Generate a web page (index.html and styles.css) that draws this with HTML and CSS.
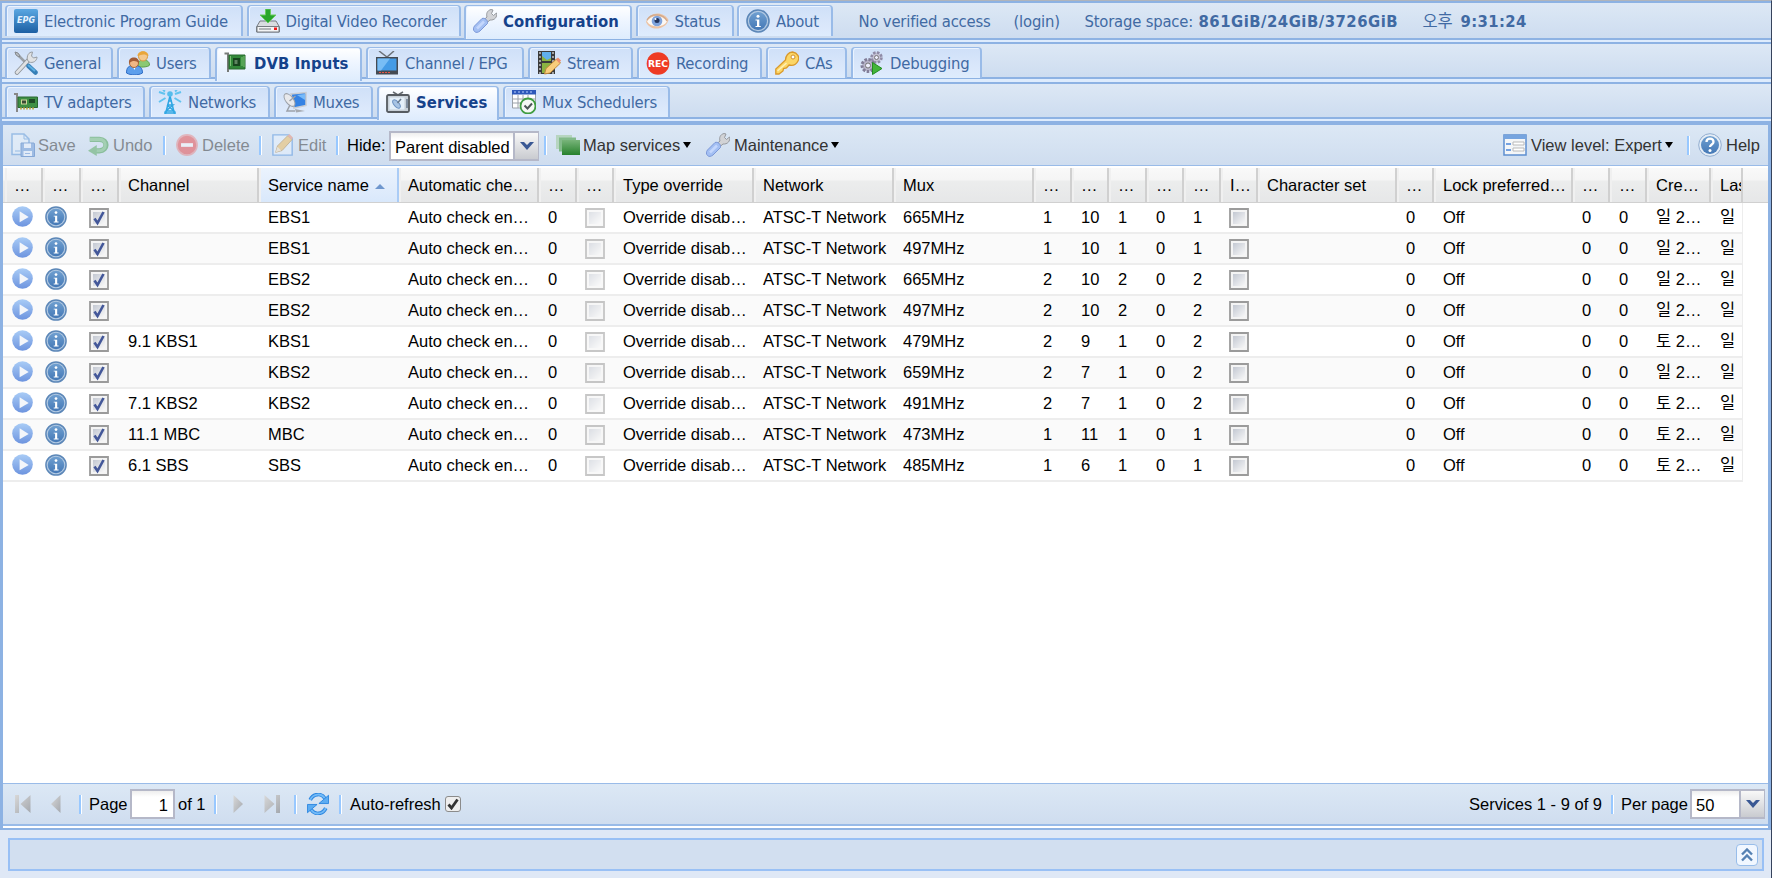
FILE: index.html
```html
<!DOCTYPE html>
<html lang="ko">
<head>
<meta charset="utf-8">
<title>Tvheadend</title>
<link rel="stylesheet" href="styles.css">
</head>
<body>
<svg class="defs" width="0" height="0" aria-hidden="true">
<defs>
<linearGradient id="gBlue" x1="0" y1="0" x2="0" y2="1"><stop offset="0" stop-color="#6f9fd0"/><stop offset="1" stop-color="#4478b6"/></linearGradient>
<linearGradient id="gPlay" x1="0" y1="0" x2="0" y2="1"><stop offset="0" stop-color="#a9ccf6"/><stop offset="1" stop-color="#6d94df"/></linearGradient>
<linearGradient id="gEpg" x1="0" y1="0" x2="0" y2="1"><stop offset="0" stop-color="#5aa7e2"/><stop offset="1" stop-color="#1c5fa3"/></linearGradient>
<linearGradient id="gGrey" x1="0" y1="0" x2="1" y2="1"><stop offset="0" stop-color="#d8d8d8"/><stop offset="1" stop-color="#a4a8ae"/></linearGradient>
<linearGradient id="gMap" x1="0" y1="0" x2="0" y2="1"><stop offset="0" stop-color="#78b47a"/><stop offset="1" stop-color="#27812c"/></linearGradient>
<linearGradient id="gBox" x1="0" y1="0" x2="1" y2="1"><stop offset="0" stop-color="#c3c8d2"/><stop offset="1" stop-color="#f8f8f8"/></linearGradient>
</defs>
<symbol id="i-epg" viewBox="0 0 24 24"><rect x="0" y="0" width="24" height="24" rx="2" fill="url(#gEpg)"/><text x="12" y="14" font-family="DejaVu Sans" font-size="8" font-weight="bold" font-style="italic" text-anchor="middle" fill="#e4f2ff" textLength="18" lengthAdjust="spacingAndGlyphs" letter-spacing="0">EPG</text></symbol>
<symbol id="i-dvr" viewBox="0 0 24 24"><path d="M4 12h16l3.500 6v5H.5v-5z" fill="#d9dce0" stroke="#777c83"/><path d="M1 17.500h22v5.500H1z" fill="#f3f4f5" stroke="#777c83"/><path d="M3 20h12" stroke="#73777d"/><path d="M18 18.500h3v2.500h-3z" fill="#f01818"/><path d="M9.500 0h5v6h5.500l-8 8-8-8h5.500z" fill="#28a62c" stroke="#6ccb60"/></symbol>
<symbol id="i-wrench" viewBox="0 0 24 24"><path d="M10 11.500l4-3.500c-1-3 0-6.500 4-7.500l2 .500-1.500 3.500 2 2L23.500 4c1 4-2 7.500-6.500 7l-4 3.500z" fill="#d2d3d6" stroke="#96999e"/><path d="M1.500 22.500C0 21 0 19 1.500 17L9 9.500c3-1 6 1.500 5.500 5L7 22c-2 1.500-4 2-5.500.5z" fill="#a3bff3" stroke="#7c98d8"/><path d="M4 19.500l7-7" stroke="#c4d7fd" stroke-width="2.500"/></symbol>
<symbol id="i-eye" viewBox="0 0 24 24"><path d="M1 13C4 2 19 2 23.500 11c-3 10-18 12-22.500 2z" fill="#edc3a3"/><path d="M2 12.500c4-7 15-7 20 0-4 6.500-16 6.500-20 0z" fill="#fbf8f5"/><path d="M2 11c4-7 16-7 20 1" fill="none" stroke="#cfa88c" stroke-width="1.200"/><circle cx="12" cy="12" r="5.300" fill="#7fa3dc"/><circle cx="12" cy="11.500" r="2.500" fill="#23345e"/><circle cx="10.500" cy="10" r="1" fill="#fff"/></symbol>
<symbol id="i-info" viewBox="0 0 24 24"><circle cx="12" cy="12" r="11" fill="#b2c9e2" stroke="#5c87b8" stroke-width="1.600"/><circle cx="12" cy="12" r="9" fill="url(#gBlue)"/><circle cx="12" cy="7.200" r="1.500" fill="#fff"/><path d="M9.500 10.500h3.800V17h1.500v1H9.500v-1H11v-5.500H9.500z" fill="#fff"/></symbol>
<symbol id="i-tools" viewBox="0 0 24 24"><path d="M4 4l12 12" stroke="#9aa0a6" stroke-width="2.500"/><path d="M1 1l3 1 2 3-1 1-3-2z" fill="#b9bec3" stroke="#84898e"/><path d="M3 21.500l12-13" stroke="#8e9499" stroke-width="4.500" stroke-linecap="round"/><path d="M3 21.500l12-13" stroke="#e0e2e4" stroke-width="2.800" stroke-linecap="round"/><path d="M13.500 9c-1-4 1-8 5-8l-1 4 2 2 3.500-1c0 4-4 6.500-8 5z" fill="#e0e2e4" stroke="#989da2"/><path d="M14.500 15l7 6.500" stroke="#367fb7" stroke-width="4.500" stroke-linecap="round"/><path d="M14 14l7 6" stroke="#5cafe2" stroke-width="2"/></symbol>
<symbol id="i-users" viewBox="0 0 24 24"><path d="M12 15c0-5 2-6 5-6s6.500 1 6.500 5c0 2-11.500 3-11.500 1z" fill="#8bc973" stroke="#5c9f48"/><circle cx="17" cy="5.500" r="4.500" fill="#f4c98e" stroke="#d79a3d"/><path d="M11.500 5c0-6.500 11-6.500 11 0-3-2-7-2-11 0z" fill="#e9a63a"/><path d="M.5 22c0-5.500 2-7.500 7.500-7.500s8.500 2 8.500 7.500c-4 2.500-12 2.500-16 0z" fill="#5d9fec" stroke="#2f6cc4"/><path d="M6.500 15h3.500l-1.500 4z" fill="#fff"/><circle cx="8" cy="12" r="4.500" fill="#efb785" stroke="#a8673a"/><path d="M3 12C2 4.500 14 5 13 12c-3-2.500-6-3-10 0z" fill="#a35d37"/></symbol>
<symbol id="i-card" viewBox="0 0 24 24"><path d="M.5 2.500H4V21" fill="none" stroke="#777b78" stroke-width="2"/><path d="M5 4h16v14H5z" fill="#328839" stroke="#286a2f"/><path d="M9 7h7v8H9z" fill="#17451d"/><path d="M6.500 5v10M18 6v9M20 5v11" stroke="#7cc274"/><path d="M10.500 9h3v4h-3z" fill="#5f8560"/></symbol>
<symbol id="i-tv" viewBox="0 0 24 24"><path d="M4 0l8 6 7-6" fill="none" stroke="#6d737a" stroke-width="1.500"/><path d="M1 6h22v17.500H1z" fill="#454b53"/><path d="M2.500 7.500h19v12h-19z" fill="#449be6"/><path d="M2.500 7.500H15l-9 12H2.500z" fill="#78bdf5"/><path d="M4 21.500h12" stroke="#e75649" stroke-dasharray="2 1"/></symbol>
<symbol id="i-stream" viewBox="0 0 24 24"><path d="M1 0h17v23H1z" fill="#3b3b3b"/><path d="M5 1h9v9H5z" fill="#60b0ee"/><path d="M5 5l5 4 4-2v3H5zM5 12h9v10H5z" fill="#8ab342"/><path d="M3 1v22M16 1v22" stroke="#c4c4c4" stroke-width="1.500" stroke-dasharray="2 2"/><path d="M7.500 23l1.500-5.500L19.500 8l4 4L13 22z" fill="#f8cd7c" stroke="#c08839"/><path d="M19 8.500l2-2 3 3-2 2.500z" fill="#ef8d6e"/></symbol>
<symbol id="i-rec" viewBox="0 0 24 24"><circle cx="12" cy="12.500" r="11.300" fill="#ee3b24"/><text x="12" y="15.500" font-family="DejaVu Sans" font-size="8" font-weight="bold" text-anchor="middle" fill="#fff" textLength="20" lengthAdjust="spacingAndGlyphs" letter-spacing="0">REC</text></symbol>
<symbol id="i-key" viewBox="0 0 24 24"><path d="M10.500 9c0-4 3-8 7-8 5 1 7.500 5 5.500 9-2 4-5 5-9 4l-2.500 3-3 .5-.5 2.500-4 3H.8v-5z" fill="#fcd666" stroke="#d9992c" stroke-width="1.300"/><path d="M2.500 20l9-8" stroke="#fff0b8" stroke-width="1.500"/><circle cx="18" cy="6" r="2" fill="#fff" stroke="#cf9030"/></symbol>
<symbol id="i-gears" viewBox="0 0 24 24"><circle cx="16.500" cy="6.500" r="5" fill="#c5c2d4" stroke="#8f8ba6" stroke-width="2.600" stroke-dasharray="2.500 1.400"/><circle cx="16.500" cy="6.500" r="2" fill="#eef" stroke="#777"/><circle cx="8" cy="14.500" r="6" fill="#b7b4c9" stroke="#817d98" stroke-width="3" stroke-dasharray="2.500 1.500"/><circle cx="8" cy="14.500" r="2.500" fill="#eef" stroke="#777"/><path d="M12.500 11.500l9.500 6-9.500 6z" fill="#43b539" stroke="#238c20"/></symbol>
<symbol id="i-adapter" viewBox="0 0 24 24"><path d="M0 4h3v18" fill="none" stroke="#888" stroke-width="2"/><path d="M4 7h19.500v10.500H4z" fill="#3f9044" stroke="#2a6932"/><path d="M7 9.500h6v5H7z" fill="#d0d99a"/><path d="M8 10.500h4v3H8z" fill="#3b4b36"/><path d="M15 9h6v4h-6z" fill="#1f4b26"/><path d="M6 18.500h14" stroke="#c2b258" stroke-width="2" stroke-dasharray="2 1"/></symbol>
<symbol id="i-net" viewBox="0 0 24 24"><path d="M12 6L7.500 24M12 6l4.500 18M10 11h4M9 15h6l-7 6h8l-7-6M6 23h12" fill="none" stroke="#2ea6e3" stroke-width="1.500"/><circle cx="12" cy="4" r="2.800" fill="#56bdec"/><path d="M7 4L1 2M7.500 8L1 12M17 4l6-2M16.500 8l6.500 4M7 1.500L5 0M17 1.500L19 0" stroke="#61c3ef" stroke-width="2"/></symbol>
<symbol id="i-mux" viewBox="0 0 24 24"><path d="M8 4l15-1.500v13L11 18z" fill="#3482e4" stroke="#c8ccd2" stroke-width="1.500"/><path d="M14 5l8-1v6z" fill="#78baf9"/><path d="M12 19l10 2-9 1.500z" fill="#a5a9b0"/><ellipse cx="6.500" cy="10" rx="3.800" ry="7.500" transform="rotate(-38 6.500 10)" fill="#e8e9ec" stroke="#9ca1a9"/><path d="M6.500 11l6-5M7 15l-3 6h8" stroke="#9ca1a9" stroke-width="1.500" fill="none"/></symbol>
<symbol id="i-services" viewBox="0 0 24 24"><path d="M7 2l5 3 5-3" fill="none" stroke="#656a70" stroke-width="1.500"/><rect x="1" y="5" width="22" height="17" rx="1.500" fill="#c8d0d8" stroke="#565b61" stroke-width="1.800"/><path d="M3.500 7.500h15v12h-15z" fill="#e5f0fa"/><ellipse cx="10.500" cy="14" rx="2.500" ry="5" transform="rotate(-40 10.500 14)" fill="#a8c4e4" stroke="#6e93c2"/><path d="M11.500 13l3.500-4" stroke="#68798c" stroke-width="1.500"/><path d="M21 9v9" stroke="#68798c" stroke-width="1.500"/></symbol>
<symbol id="i-sched" viewBox="0 0 24 24"><path d="M.5 1h23v17H.5z" fill="#fff" stroke="#9aa1a9"/><path d="M0 0h24v4.500H0z" fill="#2d58ba"/><path d="M1 9h22M1 13h22M6 5v13M11 5v13M16 5v13" stroke="#9ba2aa"/><path d="M2 2h20" stroke="#bcd0ff" stroke-dasharray="2 2"/><circle cx="16" cy="16" r="7.500" fill="#f5f8f5" stroke="#3f9c41" stroke-width="1.800"/><path d="M12.500 15.500l3 3 4.500-5" fill="none" stroke="#4c5556" stroke-width="2"/></symbol>
<symbol id="i-save" viewBox="0 0 24 24"><path d="M1 1h12l5 5v15.500H1z" fill="#e8f2fc" stroke="#5b96d8" stroke-width="1.500"/><path d="M13 1v5h5M4 18h5" fill="none" stroke="#5b96d8"/><path d="M10 10h13l.5 1v12.500H10z" fill="#6a98d7" stroke="#3b70bd"/><path d="M13 10.500h7v4.500h-7zM12.500 18h8.500v5h-8.500z" fill="#eff5ff"/><path d="M14 20.500h5" stroke="#6a98d7"/></symbol>
<symbol id="i-undo" viewBox="0 0 24 24"><path d="M2 5h11c10 0 10 13 0 13H9" fill="none" stroke="#419c48" stroke-width="6"/><path d="M2 5h11c9 0 9 13 0 13H8" fill="none" stroke="#73bd77" stroke-width="3.500"/><path d="M10 11.500V24L0 18z" fill="#56a95b"/></symbol>
<symbol id="i-delete" viewBox="0 0 24 24"><circle cx="12" cy="12" r="11" fill="#ea4546" stroke="#e98788" stroke-width="1.800"/><path d="M5.500 12h13" stroke="#fff" stroke-width="4"/></symbol>
<symbol id="i-edit" viewBox="0 0 24 24"><path d="M1 1h17l4 4v18H1z" fill="#e9f3ff" stroke="#4c8fde" stroke-width="1.500"/><path d="M4 20l2-7L17 2l5 4-11 12z" fill="#f1bb58" stroke="#ad823e"/><path d="M4 20l2-6 4 4z" fill="#f7e3c4"/><path d="M17 2l2-2 4 4-2 2z" fill="#e98b71"/></symbol>
<symbol id="i-map" viewBox="0 0 24 24"><path d="M0 2h16v14H0z" fill="#b7d5c0"/><path d="M3 4.500h17v14H3z" fill="#83ba8a"/><path d="M6 7h18v15H6z" fill="url(#gMap)"/></symbol>
<symbol id="i-view" viewBox="0 0 24 22"><path d="M1 1h22v20H1z" fill="#f4f6f8" stroke="#5d8fd0" stroke-width="1.500"/><path d="M1 1h22v4H1z" fill="#76a4df"/><path d="M3 10h5M3 16h5" stroke="#4a85d9" stroke-width="1.500"/><path d="M10 8h11v3H10zM10 14h11v3H10z" fill="#fff" stroke="#b9b9b9"/></symbol>
<symbol id="i-help" viewBox="0 0 24 24"><circle cx="12" cy="12" r="11.300" fill="#e5edf6" stroke="#92add0"/><circle cx="12" cy="12" r="9" fill="url(#gBlue)"/><path d="M8.500 9c0-4.500 7-4.500 7 0 0 2.500-3.500 2.500-3.500 5" fill="none" stroke="#fff" stroke-width="2.300"/><circle cx="12" cy="17.500" r="1.500" fill="#fff"/></symbol>
<symbol id="i-play" viewBox="0 0 22 22"><circle cx="11" cy="11" r="10.800" fill="url(#gPlay)"/><path d="M8 5.500l9.500 6L8 17z" fill="#f4f6fa"/></symbol>
<symbol id="i-refresh" viewBox="0 0 24 24"><path d="M3.500 7.500C7 0 16 0 19.500 6M20.500 16.500C17 24 8 24 4.500 18" fill="none" stroke="#2c86df" stroke-width="4"/><path d="M3.500 7.500C7 0 16 0 19.500 6M20.500 16.500C17 24 8 24 4.500 18" fill="none" stroke="#72baf8" stroke-width="2"/><path d="M23.500 2.500v9H13zM.5 21.500v-9H11z" fill="#5cacf2" stroke="#2c86df"/></symbol>
<symbol id="i-prev" viewBox="0 0 10 18"><path d="M9.500 0v18L0 9z" fill="url(#gGrey)"/></symbol>
<symbol id="i-next" viewBox="0 0 10 18"><path d="M.5 0v18L10 9z" fill="url(#gGrey)"/></symbol>
<symbol id="i-first" viewBox="0 0 16 18"><path d="M0 0h4v18H0zM15.500 0v18L5.500 9z" fill="url(#gGrey)"/></symbol>
<symbol id="i-last" viewBox="0 0 16 18"><path d="M12 0h4v18h-4zM.5 0v18l10-9z" fill="url(#gGrey)"/></symbol>
<symbol id="i-box" viewBox="0 0 20 20"><path d="M1 1h18v18H1z" fill="#f4f4f4" stroke="#9b9b9b" stroke-width="1.800"/><path d="M4 4h12v12H4z" fill="url(#gBox)"/></symbol>
<symbol id="i-tick" viewBox="0 0 20 20"><path d="M1 1h18v18H1z" fill="#f4f4f4" stroke="#9b9b9b" stroke-width="1.800"/><path d="M4 4h12v12H4z" fill="url(#gBox)"/><path d="M5.500 10.500l3 4.500 6-11" fill="none" stroke="#435799" stroke-width="2.600"/></symbol>
<symbol id="i-down" viewBox="0 0 14 8"><path d="M0 0h4l3 3 3-3h4L7 8z" fill="#3a5894"/></symbol>
</svg>

<div class="app">
  <nav class="tabs main-tabs">
    <a class="tab w238"><svg><use href="#i-epg"/></svg><span>Electronic Program Guide</span></a>
    <a class="tab w214"><svg><use href="#i-dvr"/></svg><span>Digital Video Recorder</span></a>
    <a class="tab active w168"><svg><use href="#i-wrench"/></svg><span>Configuration</span></a>
    <a class="tab w98"><svg><use href="#i-eye"/></svg><span>Status</span></a>
    <a class="tab w96"><svg><use href="#i-info"/></svg><span>About</span></a>
    <div class="status"><span class="access">No verified access</span><span class="login">(login)</span><span class="space">Storage space:</span><b class="storage">861GiB/24GiB/3726GiB</b><span class="ampm">오후</span><b class="clock">9:31:24</b></div>
  </nav>
  <nav class="tabs sub-tabs">
    <a class="tab w108"><svg><use href="#i-tools"/></svg><span>General</span></a>
    <a class="tab w94"><svg><use href="#i-users"/></svg><span>Users</span></a>
    <a class="tab active w147"><svg><use href="#i-card"/></svg><span>DVB Inputs</span></a>
    <a class="tab w158"><svg><use href="#i-tv"/></svg><span>Channel / EPG</span></a>
    <a class="tab w105"><svg><use href="#i-stream"/></svg><span>Stream</span></a>
    <a class="tab w125"><svg><use href="#i-rec"/></svg><span>Recording</span></a>
    <a class="tab w81"><svg><use href="#i-key"/></svg><span>CAs</span></a>
    <a class="tab w131"><svg><use href="#i-gears"/></svg><span>Debugging</span></a>
  </nav>
  <nav class="tabs sub-tabs third">
    <a class="tab w140"><svg><use href="#i-adapter"/></svg><span>TV adapters</span></a>
    <a class="tab w121"><svg><use href="#i-net"/></svg><span>Networks</span></a>
    <a class="tab w99"><svg><use href="#i-mux"/></svg><span>Muxes</span></a>
    <a class="tab active w122"><svg><use href="#i-services"/></svg><span>Services</span></a>
    <a class="tab w167"><svg><use href="#i-sched"/></svg><span>Mux Schedulers</span></a>
  </nav>

  <main class="panel">
    <div class="toolbar">
      <span class="btn off save"><svg class="ic"><use href="#i-save"/></svg>Save</span>
      <span class="btn off undo"><svg class="ic"><use href="#i-undo"/></svg>Undo</span>
      <i class="sep"></i>
      <span class="btn off delete"><svg class="ic"><use href="#i-delete"/></svg>Delete</span>
      <i class="sep"></i>
      <span class="btn off edit"><svg class="ic"><use href="#i-edit"/></svg>Edit</span>
      <i class="sep"></i>
      <span class="hide-label">Hide:</span>
      <span class="combo hide-combo"><span class="field">Parent disabled</span><span class="trigger"><svg><use href="#i-down"/></svg></span></span>
      <i class="sep"></i>
      <span class="btn map"><svg class="ic"><use href="#i-map"/></svg>Map services<i class="caret"></i></span>
      <span class="btn maint"><svg class="ic"><use href="#i-wrench"/></svg>Maintenance<i class="caret"></i></span>
      <span class="btn view"><svg class="ic"><use href="#i-view"/></svg>View level: Expert<i class="caret"></i></span>
      <i class="sep"></i>
      <span class="btn help"><svg class="ic"><use href="#i-help"/></svg>Help</span>
    </div>
    <div class="grid-head" id="head"></div>
    <div class="grid-body" id="body"></div>
    <div class="toolbar paging">
      <svg class="first"><use href="#i-first"/></svg>
      <svg class="prev"><use href="#i-prev"/></svg>
      <i class="sep"></i>
      <span class="page-label">Page</span><span class="page-no">1</span><span class="of">of 1</span>
      <i class="sep"></i>
      <svg class="next"><use href="#i-next"/></svg>
      <svg class="last"><use href="#i-last"/></svg>
      <i class="sep"></i>
      <svg class="refresh"><use href="#i-refresh"/></svg>
      <i class="sep"></i>
      <span class="auto">Auto-refresh</span>
      <span class="check"><svg viewBox="0 0 12 12"><path d="M1.500 6.500l3 3.500 6-8.500" fill="none" stroke="#333" stroke-width="2.800"/></svg></span>
      <span class="count">Services 1 - 9 of 9</span>
      <i class="sep"></i>
      <span class="per">Per page</span>
      <span class="combo per-combo"><span class="field">50</span><span class="trigger"><svg><use href="#i-down"/></svg></span></span>
    </div>
  </main>
  <footer class="log"><div class="log-bar"><span class="expand"><svg viewBox="0 0 12 14"><path d="M1 6.500l5-5 5 5M1 12.500l5-5 5 5" fill="none" stroke="#5581b3" stroke-width="2.400"/></svg></span></div></footer>
</div>
<script src="grid.js"></script>
</body>
</html>
```

FILE: styles.css
```css
* { box-sizing: border-box; }
html, body { margin: 0; height: 100%; overflow: hidden; }
body { background: #dfe8f6; font: 16.5px/20px "Liberation Sans", "Noto Sans CJK KR", sans-serif; color: #000; }
.defs { position: absolute; }
svg { display: block; flex: none; }
.app { width: 1772px; height: 878px; display: flex; flex-direction: column; border-top: 1px solid #b0b4bb; border-right: 1px solid #36435c; }

/* tab strips */
.tabs { display: flex; align-items: flex-start; flex: none; gap: 4px; padding: 2px 0 0 5px; border-left: 2px solid #8db2e3; border-top: 2px solid #8db2e3; background: linear-gradient(#dde8f5, #cbdbef); font-family: "DejaVu Sans Condensed", "DejaVu Sans", "Noto Sans CJK KR", sans-serif; font-stretch: condensed; color: #416aa3; }
.main-tabs { height: 41px; padding-left: 3px; box-shadow: inset 0 -2px #deecfd, inset 0 -4px #8db2e3; }
.sub-tabs { height: 40px; padding: 3px 0 0 3px; box-shadow: inset 0 -3px #deecfd, inset 0 -5px #8db2e3; }
.sub-tabs.third { height: 39px; padding-top: 2px; box-shadow: inset 0 -2px #deecfd, inset 0 -4px #8db2e3; }
.tab { display: flex; align-items: center; flex: none; height: 31px; gap: 6px; padding-left: 7px; border: 2px solid #99bbe8; border-top-width: 1px; border-bottom: 0; border-radius: 4px 4px 0 0; background: linear-gradient(#cfe0f8, #dbe8fb 70%, #deecfd); box-shadow: inset 1px 1px #eaf3ff; white-space: nowrap; }
.main-tabs .tab { margin-right: -.5px; }
.tab svg { width: 24px; height: 24px; }
.tab span { font-size: 16.5px; letter-spacing: -.2px; padding-top: 1px; }
.tab.active { height: 34px; padding-bottom: 3px; font-weight: bold; color: #15428b; background: linear-gradient(#fff, #eef5ff 45%, #deecfd); }
.tab.active span { letter-spacing: .1px; }
.third .tab span { padding-top: 2px; }
.w238 { width: 238px; } .w214 { width: 214px; } .w168 { width: 168px; } .w98 { width: 98px; } .w96 { width: 96px; }
.w108 { width: 108px; } .w94 { width: 94px; } .w147 { width: 147px; } .w158 { width: 158px; } .w105 { width: 105px; } .w125 { width: 125px; } .w81 { width: 81px; } .w131 { width: 131px; }
.w140 { width: 140px; } .w121 { width: 121px; } .w99 { width: 99px; } .w122 { width: 122px; } .w167 { width: 167px; }
.status { display: flex; margin-left: 22px; padding-top: 7px; letter-spacing: -.2px; white-space: nowrap; }
.access { width: 155px; } .login { width: 71px; } .space { width: 114px; } .storage { width: 224px; letter-spacing: .5px; } .ampm { width: 38px; } .clock { letter-spacing: .4px; }

/* services panel */
.panel { flex: none; height: 709px; display: flex; flex-direction: column; border: 4px solid #8db2e3; border-width: 4px 3px 2px 3px; background: #fff; }
.toolbar { display: flex; align-items: center; flex: none; height: 41px; border-bottom: 1px solid #99bbe8; background: linear-gradient(#dce8f5, #cfddef); white-space: nowrap; color: #000; }
.btn { display: flex; align-items: center; color: #333; }
.btn .ic { width: 24px; height: 24px; margin-right: 4px; }
.off { opacity: .5; }
.sep { flex: none; width: 3px; height: 19px; border-left: 2px solid #98c8ff; border-right: 1px solid #fff; }
.caret { border: 4.500px solid transparent; border-top: 6px solid #000; border-bottom: 0; margin-left: 3px; }
.save { width: 77px; margin-left: 8px; }
.save .ic, .map .ic { margin-right: 3px; }
.undo { width: 75px; }
.undo .ic { width: 21px; height: 21px; }
.delete { width: 83px; margin-left: 10px; }
.delete .ic, .edit .ic { width: 22px; height: 22px; margin-right: 4px; }
.edit { width: 64px; margin-left: 10px; }
.hide-label { width: 42px; margin-left: 8px; }
.combo { display: flex; flex: none; height: 30px; border: 2px solid #b5b8c8; border-right-width: 1px; }
.combo .field { flex: 1; overflow: hidden; padding: 4px 0 0 4px; background: linear-gradient(#eee, #fff 6px); }
.trigger { width: 25px; display: flex; align-items: center; justify-content: center; border-left: 2px solid #b5b8c8; background: linear-gradient(#f8f8f8, #c9cbd0); }
.trigger svg { width: 14px; height: 8px; }
.hide-combo { width: 150px; margin: 1px 5px 0 0; }
.map { width: 150px; margin-left: 9px; }
.view { margin-left: auto; width: 184px; }
.view .ic { height: 22px; }
.help { width: 70px; margin-left: 8px; }

/* grid */
.grid-head, .row { display: grid; grid-template-columns: 38px 38px 38px 140px 140px 140px 38px 37px 140px 140px 140px 38px 37px 38px 37px 37px 37px 139px 37px 139px 37px 37px 64px 32px; white-space: nowrap; }
.grid-head { flex: none; height: 37px; padding: 2px 0 0 2px; border-bottom: 1px solid #d0d0d0; background: linear-gradient(#fff 2px, #f9f9f9 2px, #f5f5f5 14px, #eceded 15px, #e6e7e8); }
.grid-head > div { overflow: hidden; padding: 7px 0 0 9px; border-right: 2px solid #d0d0d0; box-shadow: inset 2px 0 #f0f0f0; }
.grid-head > .sorted { background: linear-gradient(#ebf3fd, #d9e8fb); border-right-color: #aaccf6; }
.sorted::after { content: ""; display: inline-block; margin: 0 0 2px 6px; border: 5px solid transparent; border-bottom-color: #6f97ce; border-top: 0; }
.grid-body { flex: 1; }
.row { width: 1740px; height: 31px; padding-left: 2px; border-bottom: 2px solid #ededed; border-right: 1px solid #ededed; }
.row:nth-child(even) { background: #fafafa; }
.row > div { overflow: hidden; padding: 4px 0 0 9px; }
.row > .icon { padding: 3px 0 0 7px; }
.row > .icon.info { padding-left: 2px; }
.row .icon svg { width: 21px; height: 21px; }
.row .info svg { width: 22px; height: 22px; }
.row > .box { padding: 5px 0 0 8px; }
.row .box svg { width: 20px; height: 20px; }
.row .box.dim { opacity: .55; }

/* paging bar */
.paging { height: 43px; margin-bottom: 2px; border-top: 1px solid #99bbe8; border-bottom: 2px solid #99bbe8; padding-left: 12px; }
.first, .last { width: 16px; height: 18px; }
.prev, .next { width: 10px; height: 18px; }
.prev { margin: 0 18px 0 20px; }
.page-label { width: 41px; margin-left: 7px; }
.page-no { width: 45px; height: 30px; border: 2px solid #b5b8c8; background: linear-gradient(#eee, #fff 6px); padding: 4px 5px 0 0; text-align: right; }
.of { width: 36px; margin-left: 3px; }
.next { margin: 0 21px 0 16px; }
.last { margin-right: 14px; }
.refresh { width: 22px; height: 22px; margin: 0 10px; }
.auto { width: 95px; margin-left: 8px; }
.check { width: 16px; height: 16px; border: 1px solid #8b8b8b; border-radius: 3px; background: #eee; padding: 1px; }
.check svg { width: 12px; height: 12px; }
.count { margin-left: auto; width: 142px; }
.per { width: 69px; margin-left: 7px; }
.per-combo { width: 75px; margin-right: 3px; }

/* collapsed log */
.log { flex: 1; padding: 8px 7px 7px 8px; }
.log-bar { display: flex; justify-content: flex-end; align-items: center; height: 33px; border: 2px solid #99c0f5; background: #d2dff0; padding-right: 4px; }
.expand { width: 22px; height: 22px; display: flex; align-items: center; justify-content: center; border: 1px solid #98bdea; border-radius: 4px; background: #f1f7ff; }
.expand svg { width: 12px; height: 14px; }
```

FILE: grid.js
```js
const heads = ['…', '…', '…', 'Channel', 'Service name', 'Automatic che…', '…', '…', 'Type override', 'Network', 'Mux', '…', '…', '…', '…', '…', 'I…', 'Character set', '…', 'Lock preferred…', '…', '…', 'Cre…', 'Las'];
document.getElementById('head').innerHTML = heads
  .map((h, i) => `<div${i === 4 ? ' class="sorted"' : ''}>${h}</div>`).join('');

// channel, service, mux, local channel, major, minor, type, created weekday
const services = [
  ['', 'EBS1', '665', 1, 10, 1, 1, '일'],
  ['', 'EBS1', '497', 1, 10, 1, 1, '일'],
  ['', 'EBS2', '665', 2, 10, 2, 2, '일'],
  ['', 'EBS2', '497', 2, 10, 2, 2, '일'],
  ['9.1 KBS1', 'KBS1', '479', 2, 9, 1, 2, '토'],
  ['', 'KBS2', '659', 2, 7, 1, 2, '일'],
  ['7.1 KBS2', 'KBS2', '491', 2, 7, 1, 2, '토'],
  ['11.1 MBC', 'MBC', '473', 1, 11, 1, 1, '토'],
  ['6.1 SBS', 'SBS', '485', 1, 6, 1, 1, '토']
];
const icon = (cls, id) => `<div class="${cls}"><svg><use href="#${id}"/></svg></div>`;
const cell = v => `<div>${v}</div>`;
document.getElementById('body').innerHTML = services.map(s => '<div class="row">' +
  icon('icon', 'i-play') + icon('icon info', 'i-info') + icon('box', 'i-tick') +
  [s[0], s[1], 'Auto check en…', 0].map(cell).join('') + icon('box dim', 'i-box') +
  ['Override disab…', 'ATSC-T Network', s[2] + 'MHz', s[3], s[4], s[5], 0, s[6]].map(cell).join('') +
  icon('box', 'i-box') +
  ['', 0, 'Off', 0, 0, s[7] + ' 2…', '일'].map(cell).join('') + '</div>').join('');
```
